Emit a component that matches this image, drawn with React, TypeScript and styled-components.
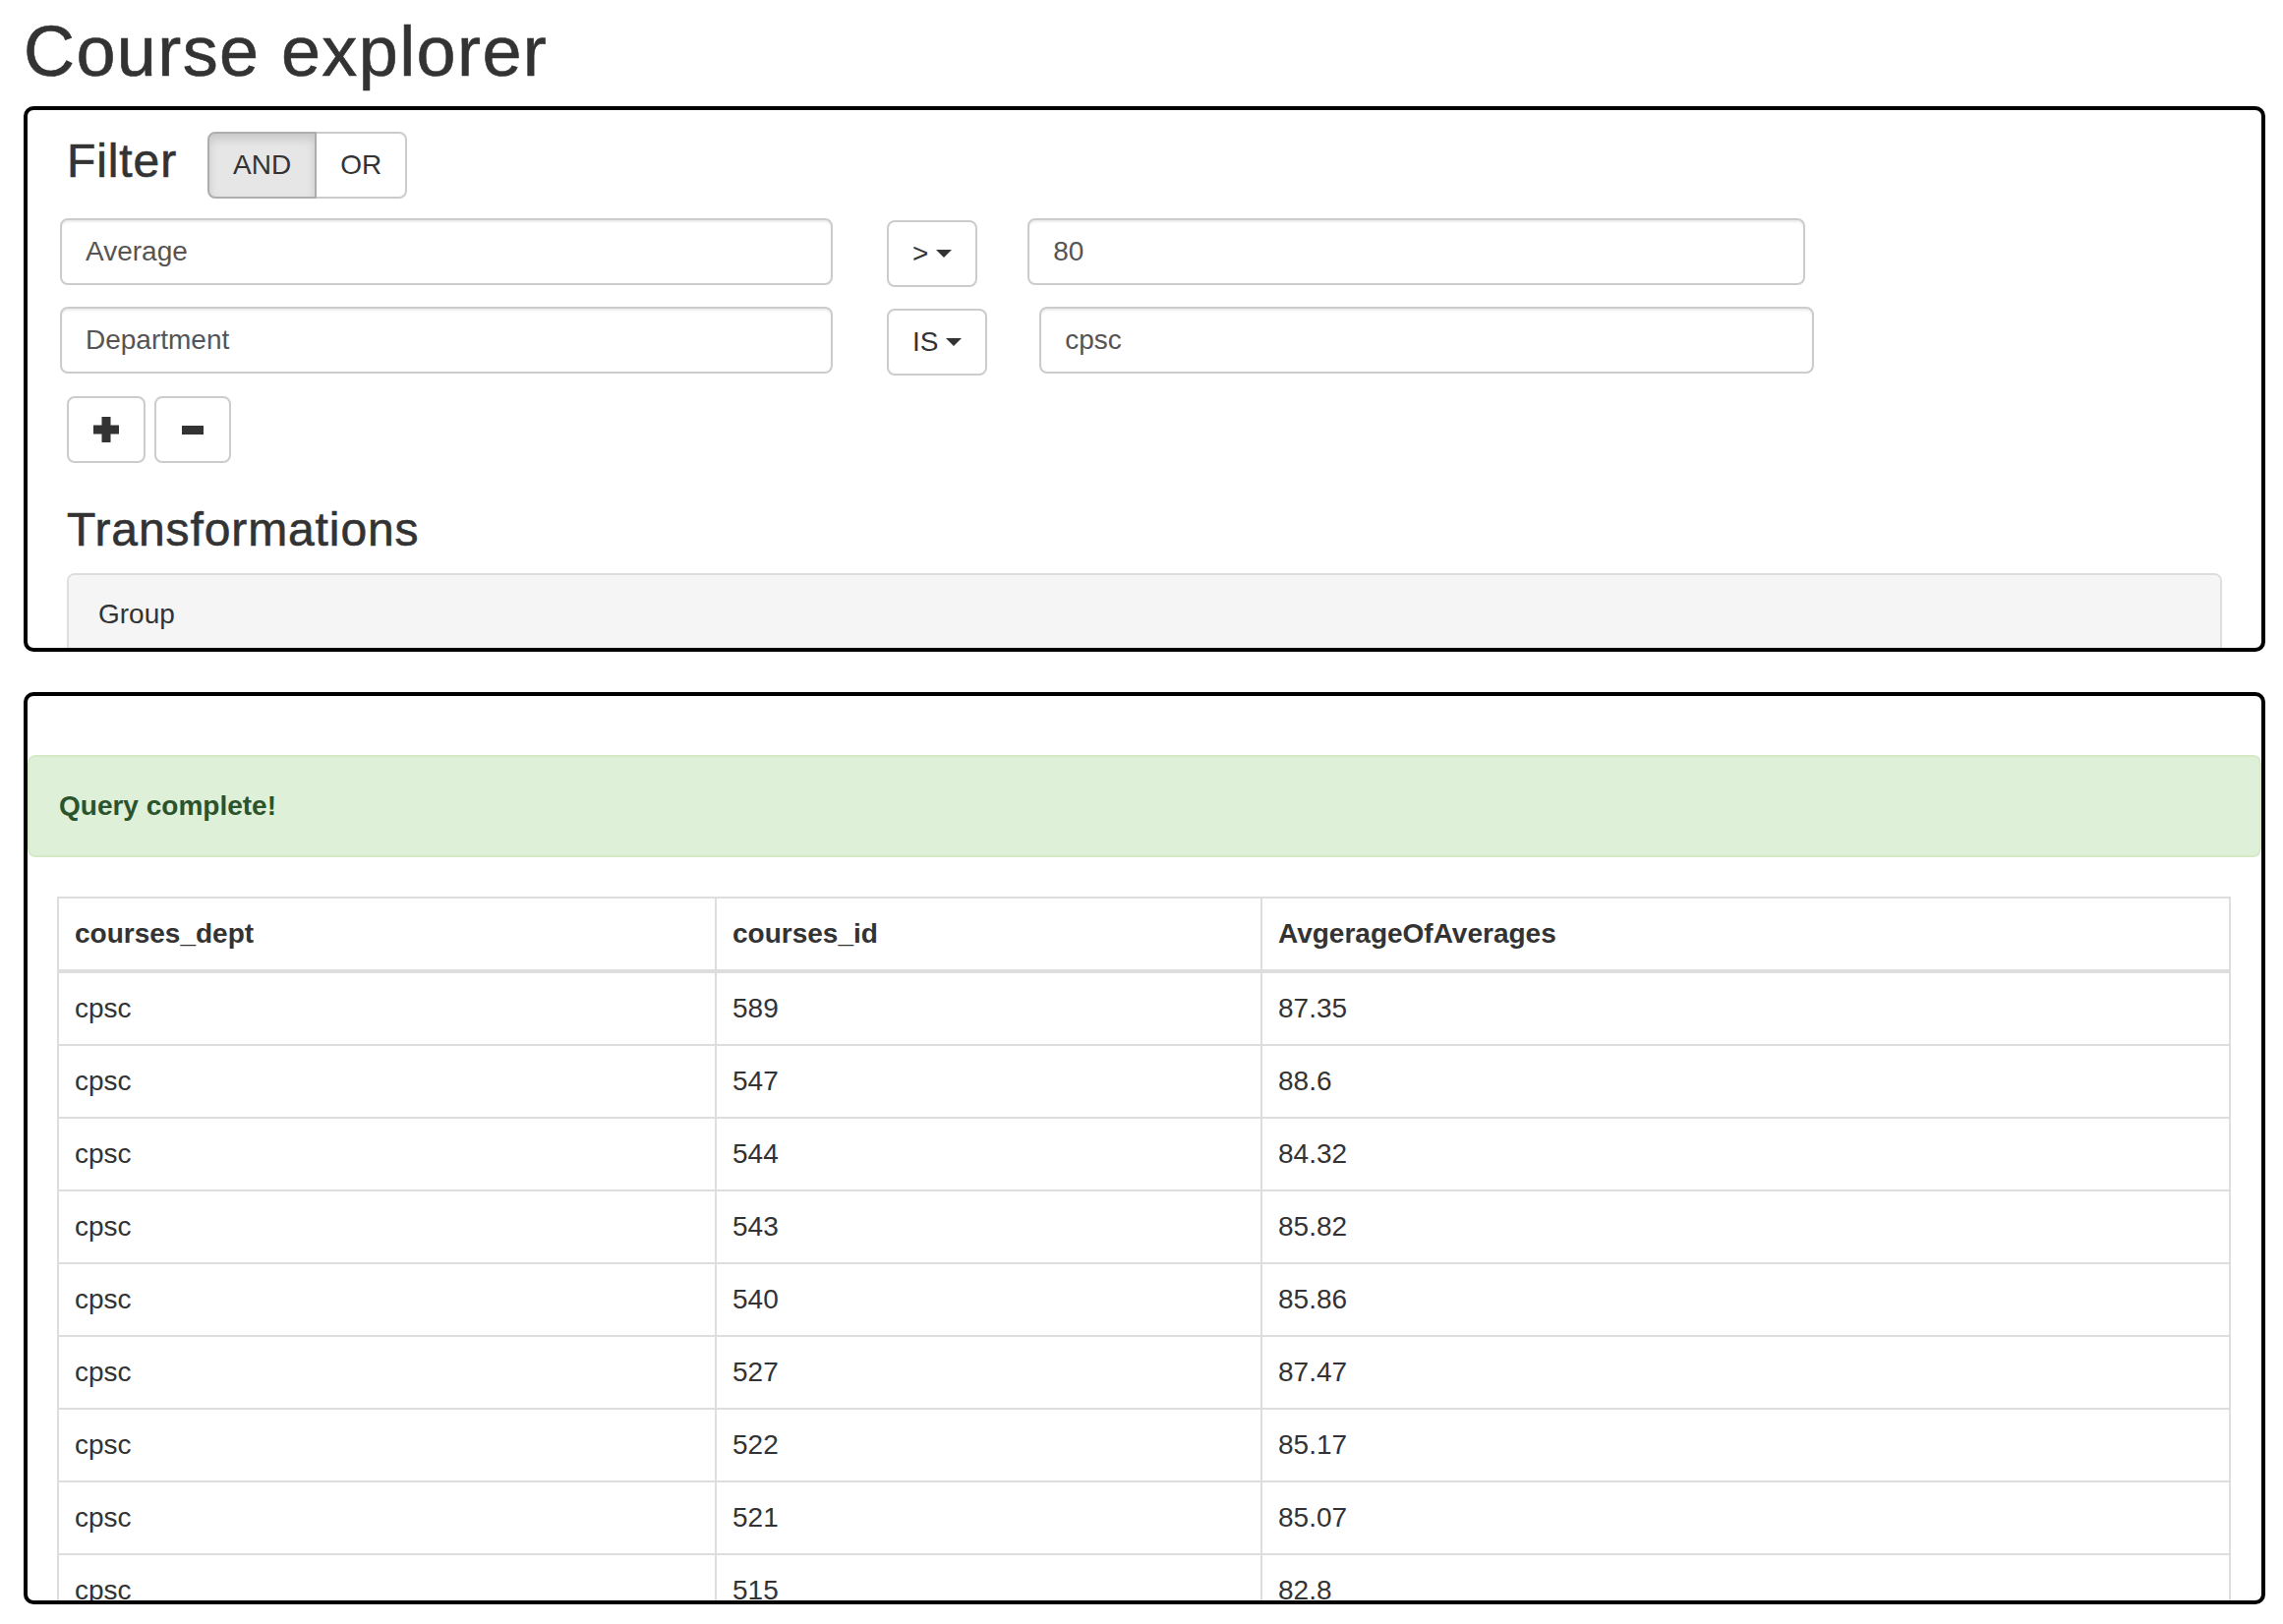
import React from "react";
import styled, { createGlobalStyle } from "styled-components";

const GlobalStyle = createGlobalStyle`
  html, body { margin: 0; padding: 0; background: #fff; }
  body {
    font-family: "Liberation Sans", Arial, Helvetica, sans-serif;
    font-size: 28px;
    line-height: 40px;
    color: #333;
  }
  *, *::before, *::after { box-sizing: border-box; }
`;

const Page = styled.div`
  width: 2322px;
  height: 1652px;
  overflow: hidden;
  padding: 0 18px 0 24px;
`;

const Title = styled.h1`
  margin: 13px 0 16px;
  font-size: 72px;
  line-height: 79px;
  font-weight: 500;
  letter-spacing: 1.4px;
  color: #333;
  -webkit-text-stroke: 0.6px #333;
`;

const FilterPanel = styled.section`
  height: 555px;
  border: 4px solid #000;
  border-radius: 10px;
  overflow: hidden;
  padding: 0 40px;
`;

const ResultsPanel = styled.section`
  height: 928px;
  margin-top: 41px;
  border: 4px solid #000;
  border-radius: 10px;
  overflow: hidden;
  padding-top: 60px;
`;

const HeaderRow = styled.div`
  display: flex;
  align-items: flex-start;
  gap: 31px;
  padding-top: 22px;
`;

const SectionHeading = styled.h3<{ $top: number; $bottom: number }>`
  margin: ${(p) => p.$top}px 0 ${(p) => p.$bottom}px;
  font-size: 48px;
  line-height: 53px;
  font-weight: 500;
  letter-spacing: 0.9px;
  color: #333;
  -webkit-text-stroke: 0.6px #333;
`;

const ButtonGroup = styled.div`
  display: flex;
`;

const ToggleButton = styled.button<{ $active?: boolean; $first?: boolean }>`
  height: 68px;
  padding: 12px 24px;
  font-family: inherit;
  font-size: 28px;
  line-height: 40px;
  color: #333;
  background: ${(p) => (p.$active ? "#e6e6e6" : "#fff")};
  border: 2px solid ${(p) => (p.$active ? "#adadad" : "#ccc")};
  box-shadow: ${(p) => (p.$active ? "inset 0 6px 10px rgba(0,0,0,0.125)" : "none")};
  border-radius: ${(p) => (p.$first ? "8px 0 0 8px" : "0 8px 8px 0")};
  margin-left: ${(p) => (p.$first ? "0" : "-2px")};
  position: relative;
  z-index: ${(p) => (p.$active ? 2 : 1)};
`;

const FilterRow = styled.div`
  display: flex;
  align-items: flex-start;
  margin: 20px 0 0 -7px;
`;

const TextInput = styled.input<{ $width: number; $gap?: number }>`
  width: ${(p) => p.$width}px;
  height: 68px;
  margin-left: ${(p) => p.$gap ?? 0}px;
  padding: 12px 24px;
  font-family: inherit;
  font-size: 28px;
  line-height: 40px;
  color: #555;
  background: #fff;
  border: 2px solid #ccc;
  border-radius: 8px;
  box-shadow: inset 0 2px 2px rgba(0, 0, 0, 0.075);
  outline: none;
`;

const OpButton = styled.button`
  height: 68px;
  margin: 2px 0 0 55px;
  padding: 12px 24px;
  display: inline-flex;
  align-items: center;
  white-space: pre;
  font-family: inherit;
  font-size: 28px;
  line-height: 40px;
  color: #333;
  background: #fff;
  border: 2px solid #ccc;
  border-radius: 8px;
`;

const Caret = styled.span`
  display: inline-block;
  width: 0;
  height: 0;
  border-top: 8px solid #333;
  border-left: 8px solid transparent;
  border-right: 8px solid transparent;
`;

const ButtonRow = styled.div`
  display: flex;
  gap: 9px;
  margin-top: 21px;
`;

const IconButton = styled.button<{ $width: number }>`
  width: ${(p) => p.$width}px;
  height: 68px;
  padding: 0;
  display: flex;
  align-items: center;
  justify-content: center;
  background: #fff;
  border: 2px solid #ccc;
  border-radius: 8px;
`;

const GroupPanel = styled.div`
  border: 2px solid #ddd;
  border-radius: 8px;
  background: #fff;
`;

const GroupHeading = styled.div`
  padding: 20px 30px;
  background: #f5f5f5;
  border-radius: 6px 6px 0 0;
  font-size: 28px;
  line-height: 40px;
  color: #333;
  height: 120px;
`;

const Alert = styled.div`
  margin-bottom: 40px;
  padding: 30px;
  background: #dff0d8;
  border: 2px solid #d6e9c6;
  border-radius: 8px;
  color: #2b542c;
  font-weight: bold;
  font-size: 28px;
  line-height: 40px;
`;

const TableWrap = styled.div`
  padding: 0 31px 0 30px;
`;

const Table = styled.table`
  width: 100%;
  table-layout: fixed;
  border-collapse: collapse;
  border: 2px solid #ddd;
`;

const Col = styled.col<{ $width?: number }>`
  width: ${(p) => (p.$width ? `${p.$width}px` : "auto")};
`;

const Th = styled.th`
  text-align: left;
  padding: 16px;
  font-size: 28px;
  line-height: 40px;
  font-weight: bold;
  color: #333;
  border: 2px solid #ddd;
  border-bottom-width: 4px;
`;

const Td = styled.td`
  padding: 16px;
  font-size: 28px;
  line-height: 40px;
  color: #333;
  border: 2px solid #ddd;
`;

const PlusIcon = () => (
  <svg width="26" height="26" viewBox="0 0 26 26" aria-hidden="true">
    <rect x="0" y="8.5" width="26" height="9" fill="#333" />
    <rect x="8.5" y="0" width="9" height="26" fill="#333" />
  </svg>
);

const MinusIcon = () => (
  <svg width="22" height="9" viewBox="0 0 22 9" aria-hidden="true">
    <rect x="0" y="0" width="22" height="9" fill="#333" />
  </svg>
);

const filters = [
  { field: "Average", op: ">", value: "80", gap: 51, width: 791 },
  { field: "Department", op: "IS", value: "cpsc", gap: 53, width: 788 },
];

const rows: [string, string, string][] = [
  ["cpsc", "589", "87.35"],
  ["cpsc", "547", "88.6"],
  ["cpsc", "544", "84.32"],
  ["cpsc", "543", "85.82"],
  ["cpsc", "540", "85.86"],
  ["cpsc", "527", "87.47"],
  ["cpsc", "522", "85.17"],
  ["cpsc", "521", "85.07"],
  ["cpsc", "515", "82.8"],
];

export default function App() {
  return (
    <>
      <GlobalStyle />
      <Page>
        <Title>Course explorer</Title>
        <FilterPanel>
          <HeaderRow>
            <SectionHeading $top={3} $bottom={0}>Filter</SectionHeading>
            <ButtonGroup>
              <ToggleButton $active $first>AND</ToggleButton>
              <ToggleButton>OR</ToggleButton>
            </ButtonGroup>
          </HeaderRow>
          {filters.map((f) => (
            <FilterRow key={f.field}>
              <TextInput $width={786} defaultValue={f.field} />
              <OpButton>
                {f.op + " "}
                <Caret />
              </OpButton>
              <TextInput $width={f.width} $gap={f.gap} defaultValue={f.value} />
            </FilterRow>
          ))}
          <ButtonRow>
            <IconButton $width={80} aria-label="add">
              <PlusIcon />
            </IconButton>
            <IconButton $width={78} aria-label="remove">
              <MinusIcon />
            </IconButton>
          </ButtonRow>
          <SectionHeading $top={41} $bottom={18}>Transformations</SectionHeading>
          <GroupPanel>
            <GroupHeading>Group</GroupHeading>
          </GroupPanel>
        </FilterPanel>
        <ResultsPanel>
          <Alert>Query complete!</Alert>
          <TableWrap>
            <Table>
              <colgroup>
                <Col $width={669} />
                <Col $width={555} />
                <Col />
              </colgroup>
              <thead>
                <tr>
                  <Th>courses_dept</Th>
                  <Th>courses_id</Th>
                  <Th>AvgerageOfAverages</Th>
                </tr>
              </thead>
              <tbody>
                {rows.map(([dept, id, avg]) => (
                  <tr key={id}>
                    <Td>{dept}</Td>
                    <Td>{id}</Td>
                    <Td>{avg}</Td>
                  </tr>
                ))}
              </tbody>
            </Table>
          </TableWrap>
        </ResultsPanel>
      </Page>
    </>
  );
}
